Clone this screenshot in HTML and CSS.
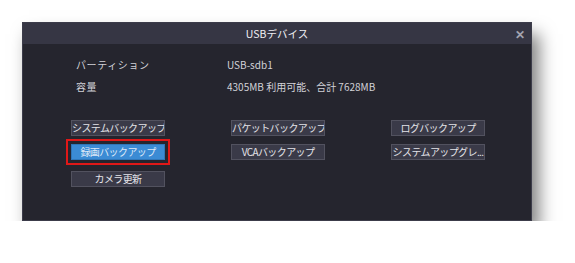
FILE: index.html
```html
<!DOCTYPE html>
<html lang="ja">
<head>
    <meta charset="UTF-8">
    <meta name="viewport" content="width=device-width, initial-scale=1.0">
    <title>USBデバイス</title>
    <link rel="stylesheet" href="styles.css">
</head>
<body>
    <div class="dialog">
        <div class="dialog-title">
            <span>USBデバイス</span>
            <span class="close">&#x2715;</span>
        </div>

        <div class="info">
            <div class="label">パーティション</div>
            <div class="value">USB-sdb1</div>
            <div class="label">容量</div>
            <div class="value">4305MB 利用可能、合計 7628MB</div>
        </div>

        <div class="actions">
            <button class="btn">システムバックアップ</button>
            <button class="btn">パケットバックアップ</button>
            <button class="btn">ログバックアップ</button>
            <button class="btn btn-active">録画バックアップ</button>
            <button class="btn">VCAバックアップ</button>
            <button class="btn">システムアップグレ...</button>
            <button class="btn btn-last">カメラ更新</button>
        </div>
    </div>
</body>
</html>
```

FILE: styles.css
```css
body {
    margin: 0;
    padding: 0;
    background-color: #ffffff;
    font-family: 'Noto Sans CJK JP', 'Noto Sans', sans-serif;
}
.dialog {
    margin: 22px 0 0 22px;
    width: 510px;
    height: 199px;
    box-sizing: border-box;
    background-color: #25252e;
    border: 1px solid #3c3c4a;
    box-shadow: 7px 12px 16px rgba(0, 0, 0, 0.5);
}
.dialog-title {
    height: 21px;
    background-color: #363644;
    color: #f0f0f4;
    font-size: 10.5px;
    display: flex;
    align-items: center;
    justify-content: center;
    position: relative;
}
.close {
    position: absolute;
    right: 6px;
    top: 2px;
    color: #a4a4b0;
    font-size: 12px;
    font-weight: bold;
}
.info {
    display: grid;
    grid-template-columns: 151px auto;
    row-gap: 7px;
    padding: 13px 0 0 53px;
    color: #d2d2d8;
    font-size: 10px;
    line-height: 15px;
}
.label {
    letter-spacing: 0.6px;
}
.actions {
    display: grid;
    grid-template-columns: repeat(3, 160px);
    grid-auto-rows: 16px;
    row-gap: 8px;
    padding: 26px 0 0 48px;
}
.btn {
    width: 94px;
    height: 16px;
    padding: 0;
    box-sizing: border-box;
    background-color: #3a3a48;
    border: 1px solid #52525f;
    color: #e4e4e8;
    font-family: inherit;
    font-size: 10px;
    letter-spacing: -0.6px;
    line-height: 14px;
    white-space: nowrap;
    overflow: hidden;
}
.btn-active {
    background-color: #3b8bd4;
    border-color: #2f76b8;
    color: #dfe9f7;
    outline: 2px solid #e01818;
    outline-offset: 3px;
}
.btn-last {
    margin-top: 3px;
}
```
